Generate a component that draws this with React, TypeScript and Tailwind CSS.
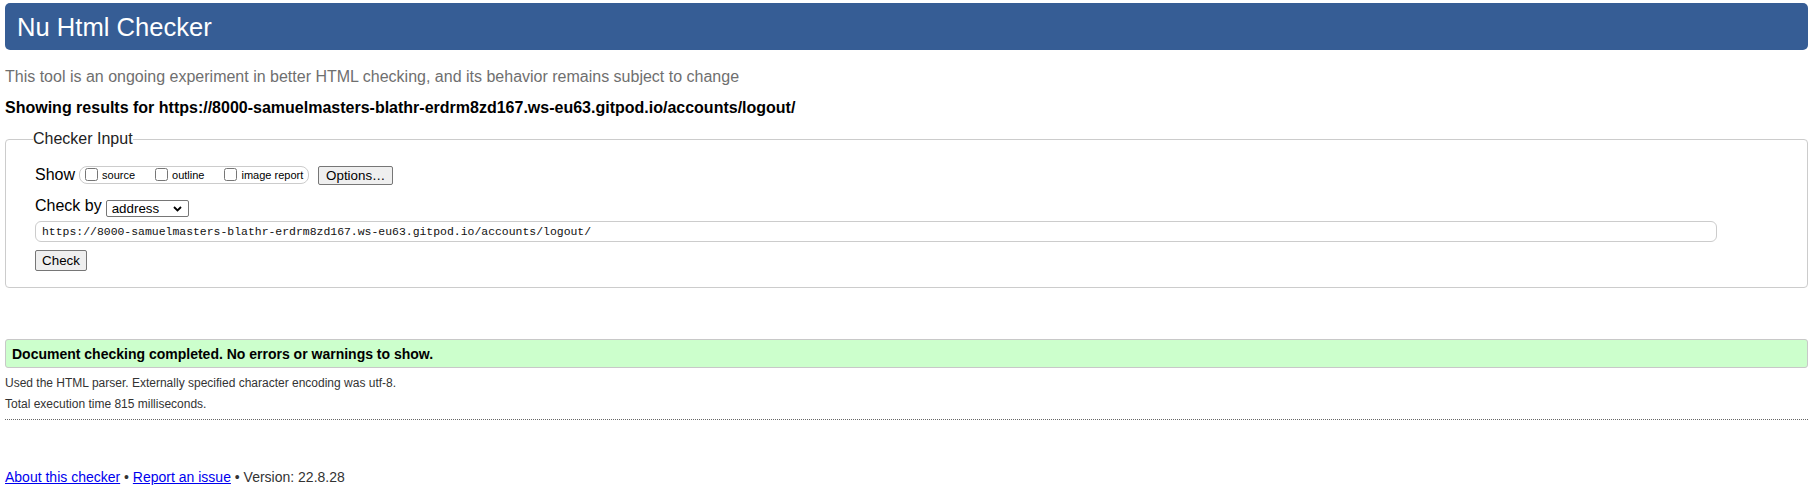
import React from "react";

const url =
  "https://8000-samuelmasters-blathr-erdrm8zd167.ws-eu63.gitpod.io/accounts/logout/";

function ShowOption({ label, gapRight }: { label: string; gapRight?: boolean }) {
  return (
    <label className={`flex items-center ${gapRight ? "mr-[20px]" : ""}`}>
      <input type="checkbox" className="m-0 w-[13px] h-[13px] -translate-y-[1px]" />
      <span className="ml-[4px] text-[11px] leading-[13px] text-black">{label}</span>
    </label>
  );
}

export default function App() {
  return (
    <div className="min-h-screen bg-white font-['Liberation_Sans',Arial,sans-serif] text-black">
      <div className="ml-[5px] w-[1803px]">
        {/* header bar */}
        <header className="mt-[3px] h-[47px] flex items-center pl-[12px] rounded-[5px] bg-[#365d95]">
          <h1 className="text-[25.6px] leading-[30px] font-normal text-white">Nu Html Checker</h1>
        </header>

        <p className="mt-[18px] text-[16px] leading-[18px] text-[#6f6f6f]">
          This tool is an ongoing experiment in better HTML checking, and its behavior remains subject to change
        </p>
        <p className="mt-[13px] text-[16px] leading-[18px] font-bold text-black">
          Showing results for {url}
        </p>

        {/* checker input */}
        <fieldset className="mt-[13px] border border-[#cccccc] rounded-[4px] pl-[29px] pt-[17px] pb-[16px]">
          <legend className="-ml-[2px] text-[16px] leading-[18px] text-[#222]">Checker Input</legend>

          <div className="flex items-center h-[20px]">
            <span className="text-[16px] leading-[18px]">Show</span>
            <div className="ml-[4px] flex items-center h-[18px] pl-[5px] pr-[5px] border border-[#cccccc] rounded-[8px]">
              <ShowOption label="source" gapRight />
              <ShowOption label="outline" gapRight />
              <ShowOption label="image report" />
            </div>
            <button className="ml-[9px] w-[75px] h-[19px] flex items-center justify-center text-[13.33px] leading-[15px] bg-[#efefef] border border-[#767676] rounded-[2px]">
              Options…
            </button>
          </div>

          <div className="mt-[11px] flex items-start">
            <span className="text-[16px] leading-[18px] mt-[1px]">Check by</span>
            <div className="ml-[4px] mt-[4px] w-[83px] h-[17px] flex items-center justify-between pl-[5px] pr-[6px] border border-[#767676] rounded-[2px] bg-white">
              <span className="text-[13.33px] leading-[15px]">address</span>
              <svg width="9" height="6" viewBox="0 0 9 6" fill="none">
                <path d="M1 1l3.5 3.5L8 1" stroke="#000" strokeWidth="1.8" />
              </svg>
            </div>
          </div>

          <div className="mt-[4px] w-[1682px] h-[21px] flex items-center pl-[6px] border border-[#cccccc] rounded-[6px]">
            <span className="font-['Liberation_Mono',monospace] text-[11.45px] leading-[14px] text-[#111]">{url}</span>
          </div>

          <button className="mt-[8px] w-[52px] h-[21px] flex items-center justify-center text-[13.33px] leading-[15px] bg-[#efefef] border border-[#767676] rounded-[2px]">
            Check
          </button>
        </fieldset>

        {/* result */}
        <div className="mt-[51px] h-[29px] flex items-center pl-[6px] bg-[#ccffcc] border border-[#c8c8c8] rounded-[3px]">
          <p className="text-[14px] leading-[16px] font-bold">
            Document checking completed. No errors or warnings to show.
          </p>
        </div>

        <p className="mt-[8px] text-[12px] leading-[14px] text-[#333]">
          Used the HTML parser. Externally specified character encoding was utf-8.
        </p>
        <p className="mt-[7px] text-[12px] leading-[14px] text-[#333]">
          Total execution time 815 milliseconds.
        </p>
        <hr className="mt-[8px] border-0 border-t border-dotted border-[#666]" />

        <p className="mt-[49px] text-[14px] leading-[16px] text-[#333]">
          <a href="#" className="text-[#0000ee] underline">About this checker</a>
          {" • "}
          <a href="#" className="text-[#0000ee] underline">Report an issue</a>
          {" • Version: 22.8.28"}
        </p>
      </div>
    </div>
  );
}
